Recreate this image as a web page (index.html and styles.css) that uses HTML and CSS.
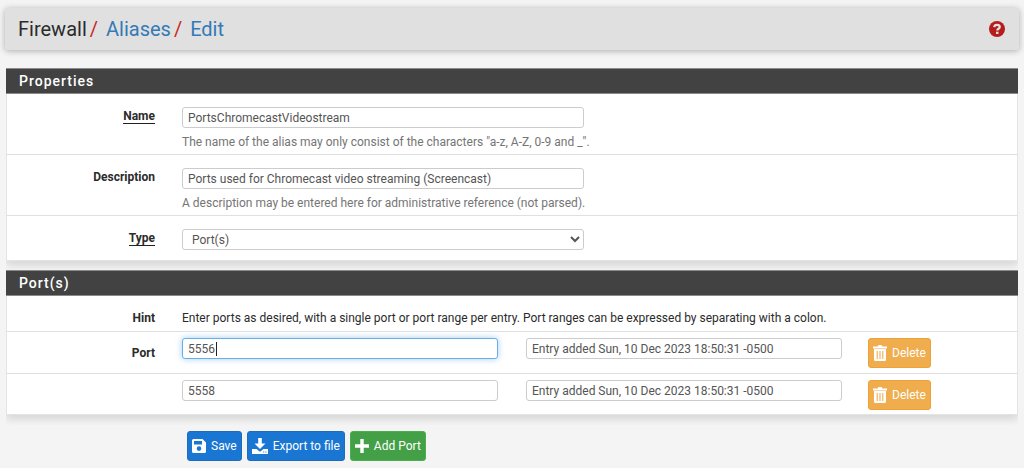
FILE: index.html
```html
<!DOCTYPE html>
<html lang="en">
<head>
<meta charset="utf-8">
<meta name="viewport" content="width=device-width, initial-scale=1">
<title>Firewall: Aliases: Edit</title>
<link rel="stylesheet" href="styles.css">
</head>
<body>
<header class="page-header">
  <nav class="breadcrumb" aria-label="Breadcrumb">
    <span>Firewall</span><span class="slash">/</span>
    <a href="#">Aliases</a><span class="slash">/</span>
    <a href="#">Edit</a>
  </nav>
  <a class="help" href="#" aria-label="Help">
    <svg viewBox="0 0 16 16" width="16" height="16"><circle cx="8" cy="8" r="8" fill="#b71c1c"/><path d="M5.200 6.200C5.400 4.500 6.500 3.800 8 3.800c1.700 0 2.700.8 2.700 2.100 0 1.900-2.400 1.700-2.400 3.600" fill="none" stroke="#e0e0e0" stroke-width="2.300"/><rect x="7" y="10.700" width="2.500" height="2.300" fill="#e0e0e0"/></svg>
  </a>
</header>

<form class="form">
  <section class="panel">
    <h2 class="panel-title">Properties</h2>
    <div class="row">
      <label class="label required" for="name"><span>Name</span></label>
      <div class="field span-5"><input class="control" id="name" type="text" value="PortsChromecastVideostream"></div>
      <p class="help-text">The name of the alias may only consist of the characters "a-z, A-Z, 0-9 and _".</p>
    </div>
    <div class="row">
      <label class="label" for="descr"><span>Description</span></label>
      <div class="field span-5"><input class="control" id="descr" type="text" value="Ports used for Chromecast video streaming (Screencast)"></div>
      <p class="help-text">A description may be entered here for administrative reference (not parsed).</p>
    </div>
    <div class="row row-last">
      <label class="label required" for="type"><span>Type</span></label>
      <div class="field span-5"><select class="control" id="type"><option>Port(s)</option></select></div>
    </div>
  </section>

  <section class="panel">
    <h2 class="panel-title">Port(s)</h2>
    <div class="row row-hint">
      <span class="label">Hint</span>
      <p class="hint">Enter ports as desired, with a single port or port range per entry. Port ranges can be expressed by separating with a colon.</p>
    </div>
    <div class="row row-port">
      <label class="label" for="port0">Port</label>
      <div class="field span-4"><input class="control active" id="port0" type="text" value="5556"><span class="caret"></span></div>
      <div class="field span-4"><input class="control" type="text" aria-label="Entry description" value="Entry added Sun, 10 Dec 2023 18:50:31 -0500"></div>
      <div class="action"><button class="btn btn-warning" type="button"><svg class="icon" viewBox="0 0 14 16"><path d="M0 1.500h4.500L5.500 0h3l1 1.500H14v2H0zM1 4h12v10.500q0 1.500-1.500 1.500h-9Q1 16 1 14.500z" fill="#fff"/><path d="M4.200 6v8M7 6v8M9.800 6v8" stroke="#f0ad4e" stroke-width="1.100"/></svg>Delete</button></div>
    </div>
    <div class="row row-port">
      <div class="field span-4 second"><input class="control" type="text" aria-label="Port" value="5558"></div>
      <div class="field span-4"><input class="control" type="text" aria-label="Entry description" value="Entry added Sun, 10 Dec 2023 18:50:31 -0500"></div>
      <div class="action"><button class="btn btn-warning" type="button"><svg class="icon" viewBox="0 0 14 16"><path d="M0 1.500h4.500L5.500 0h3l1 1.500H14v2H0zM1 4h12v10.500q0 1.500-1.500 1.500h-9Q1 16 1 14.500z" fill="#fff"/><path d="M4.200 6v8M7 6v8M9.800 6v8" stroke="#f0ad4e" stroke-width="1.100"/></svg>Delete</button></div>
    </div>
  </section>

  <div class="row footer">
    <div class="buttons">
      <button class="btn btn-primary" type="submit"><svg class="icon" viewBox="0 0 14 14"><path fill-rule="evenodd" d="M1.500 0H10.500L14 3.500V12.500Q14 14 12.500 14h-11Q0 14 0 12.500v-11Q0 0 1.500 0zM2 2v3.500h8V2zM7 7.300a2.300 2.300 0 1 0 0 4.600 2.300 2.300 0 0 0 0-4.600z" fill="#fff"/></svg>Save</button>
      <button class="btn btn-primary" type="button"><svg class="icon icon-wide" viewBox="0 0 16 16"><path fill-rule="evenodd" d="M6.200 0h3.600v5.500h3.700L8 11 2.500 5.500h3.700zM0 11h4.500L8 13.700 11.500 11H16v5H0zM11.200 13.600h1v1h-1zM13.400 13.600h1v1h-1z" fill="#fff"/></svg>Export to file</button>
      <button class="btn btn-success" type="button"><svg class="icon" viewBox="0 0 14 14"><path d="M5.300 0h3.400v5.300H14v3.400H8.700V14H5.300V8.700H0V5.300h5.300z" fill="#fff"/></svg>Add Port</button>
    </div>
  </div>
</form>
</body>
</html>
```
FILE: styles.css
```css
* { box-sizing: border-box; }

body {
  margin: 0;
  padding: 8px 6px;
  background: #f4f4f4;
  color: #2b2b2b;
  font: 12px/18px Roboto, sans-serif;
  overflow-x: hidden;
}

.page-header {
  display: flex;
  align-items: center;
  justify-content: space-between;
  min-height: 42px;
  margin: 0 -1px 18px;
  padding: 0 14px 0 13px;
  background: #e0e0e0;
  border-radius: 3px;
  box-shadow: 0 1px 6px rgba(0, 0, 0, .3);
}

.breadcrumb { font-size: 20px; line-height: 24px; }
.breadcrumb a { color: #337ab7; text-decoration: none; }
.slash { margin: 0 3px; color: #c62828; }
.help { display: flex; }

.panel {
  margin-bottom: 9px;
  background: #fff;
  border: 1px solid #e4e4e4;
  border-top: 0;
  box-shadow: 0 4px 8px rgba(0, 0, 0, .13);
  clip-path: inset(0 0 -10px 0);
}

.panel-title {
  margin: 0 -1px;
  padding: 3px 13px;
  background: #424242;
  border: 1px solid #8a8a8a;
  border-width: 1px 0;
  color: #fff;
  font-size: 14px;
  font-weight: 500;
  line-height: 18px;
  letter-spacing: 1px;
}

/* Twelve-column rows whose gutters reach past the panel edges. */
.row {
  display: grid;
  grid-template-columns: repeat(12, minmax(0, 1fr));
  margin: 0 -11px;
  padding-top: 13px;
  border-bottom: 1px solid #e0e0e0;
}

.row-last { padding-bottom: 10px; border-bottom: 0; }

.label {
  grid-column: span 2;
  padding-right: 13px;
  font-weight: 700;
  text-align: right;
}
.required span { border-bottom: 1px solid #212121; }

.field { position: relative; padding: 0 14px; }
.span-5 { grid-column: span 5; }
.span-4 { grid-column: span 4; }
.second { grid-column: 3 / span 4; }

.control {
  display: block;
  width: 100%;
  height: 21px;
  padding: 0 5px;
  background: #fff;
  border: 1px solid #ccc;
  border-radius: 3px;
  color: #555;
  font: 12px/18px Roboto, sans-serif;
}
.control.active { border-color: #66afe9; box-shadow: 0 0 6px rgba(102, 175, 233, .6); }

.caret {
  position: absolute;
  top: 4px;
  left: 48px;
  width: 1px;
  height: 14px;
  background: #222;
}

.help-text {
  grid-column: 3 / -1;
  margin: 5px 0 3px;
  padding-left: 14px;
  color: #757575;
}

.row-hint { padding: 13px 0 4px; }
.hint { grid-column: span 10; margin: 0; padding-left: 14px; }

.row-port { padding: 6px 0 5px; }
.row-port .label { padding-top: 6px; }
.row-port:last-child { padding-bottom: 4px; border-bottom: 0; }
.action { grid-column: span 2; padding-left: 12px; }

.btn {
  display: inline-flex;
  align-items: center;
  gap: 5px;
  height: 30px;
  padding: 0 4px;
  border: 1px solid;
  border-radius: 3px;
  color: #fff;
  font: 12px/18px Roboto, sans-serif;
  white-space: nowrap;
}
.btn-warning { background: #f0ad4e; border-color: #eea236; vertical-align: top; }
.btn-primary { background: #1976d2; border-color: #1f6cb8; }
.btn-success { background: #43a047; border-color: #4cae4c; }
.icon { width: 14px; height: 16px; }
.icon-wide { width: 16px; }

.footer { margin: 0 -10px; padding-top: 7px; border: 0; }
.buttons { grid-column: 3 / -1; display: flex; gap: 5px; padding-left: 19px; }
```
